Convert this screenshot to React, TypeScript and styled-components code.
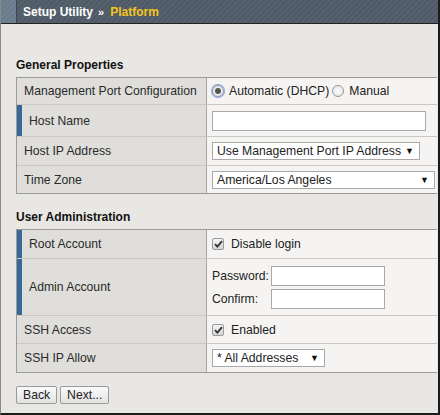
import styled, { createGlobalStyle } from 'styled-components';

const GlobalStyle = createGlobalStyle`
  html, body {
    margin: 0;
    padding: 0;
    background: #e8e7e3;
  }
  body {
    font-family: "Liberation Sans", Arial, sans-serif;
    font-size: 12.2px;
    color: #222;
  }
`;

const generalRows = [
  { label: 'Management Port Configuration', kind: 'radio', required: false },
  { label: 'Host Name', kind: 'text', required: true },
  { label: 'Host IP Address', kind: 'ipselect', required: false },
  { label: 'Time Zone', kind: 'tzselect', required: false },
];

const Frame = styled.div`
  width: 440px;
  height: 415px;
  box-sizing: border-box;
  border-left: 1px solid #8a8a8a;
  border-right: 2px solid #1c1c1c;
  border-bottom: 2px solid #1c1c1c;
  background: #e8e7e3;
  display: flex;
  flex-direction: column;
`;

const TopBar = styled.div`
  display: flex;
  height: 23px;
  border-bottom: 1px solid #222;
`;

const Stub = styled.div`
  width: 15px;
  background: repeating-linear-gradient(135deg, #708292 0 2px, #6a7c8c 2px 4px);
  border-right: 1px solid #3c4650;
`;

const Crumbs = styled.div`
  flex: 1;
  display: flex;
  align-items: center;
  padding-left: 6px;
  font-weight: bold;
  font-size: 12px;
  color: #fff;
  background: repeating-linear-gradient(135deg, #56616e 0 2px, #4f5a66 2px 4px);
`;

const Arrow = styled.span`
  margin: 0 6px 0 5px;
  font-size: 11px;
`;

const Current = styled.span`
  color: #f4c51c;
`;

const Content = styled.div`
  padding: 34px 1px 0 15px;
`;

const SectionTitle = styled.div`
  font-weight: bold;
  font-size: 12px;
  line-height: 15px;
  margin-bottom: 4px;
  color: #111;
`;

const Table = styled.div`
  border: 1px solid #9a9a9a;
  border-right: none;
  margin-bottom: 16px;
`;

const Row = styled.div<{ $h: number }>`
  box-sizing: border-box;
  display: grid;
  grid-template-columns: 190px 1fr;
  height: ${(p) => p.$h}px;
  border-bottom: 1px solid #c9c8c5;

  &:last-child {
    border-bottom: none;
  }
`;

const Label = styled.div<{ $required?: boolean }>`
  display: flex;
  align-items: center;
  background: #dfdedb;
  border-right: 1px solid #a9a9a9;
  padding-left: 7px;
  border-left: ${(p) => (p.$required ? '5px solid #3a6896' : 'none')};
  color: #2a2a2a;
`;

const Value = styled.div`
  display: flex;
  align-items: center;
  background: #f5f4f2;
  padding-left: 5px;
  gap: 3px;
`;

const Stack = styled.div`
  display: flex;
  flex-direction: column;
  gap: 3px;
`;

const Line = styled.div`
  display: flex;
  align-items: center;
`;

const FieldLabel = styled.span`
  width: 59px;
`;

const TextInput = styled.div<{ $w: number }>`
  width: ${(p) => p.$w}px;
  height: 18px;
  background: #fff;
  border: 1px solid #a9a9a9;
`;

const Select = styled.div<{ $w: number }>`
  box-sizing: border-box;
  width: ${(p) => p.$w}px;
  height: 18px;
  background: #fff;
  border: 1px solid #a9a9a9;
  display: flex;
  align-items: center;
  justify-content: space-between;
  padding: 0 5px 0 4px;
  color: #222;
`;

const Caret = styled.span`
  font-size: 9px;
  color: #111;
`;

const Radio = styled.span<{ $on?: boolean }>`
  box-sizing: border-box;
  width: 12px;
  height: 12px;
  border-radius: 50%;
  border: 1px solid #9a9a9a;
  background: radial-gradient(circle, #fff 0%, #dedede 100%);
  display: inline-flex;
  align-items: center;
  justify-content: center;
  margin-right: 2px;
  box-shadow: ${(p) => (p.$on ? '0 0 0 1px #7aa6e8' : 'none')};

  &::after {
    content: '';
    width: 6px;
    height: 6px;
    border-radius: 50%;
    background: ${(p) => (p.$on ? '#555' : 'transparent')};
  }
`;

const Check = styled.span`
  box-sizing: border-box;
  width: 12px;
  height: 12px;
  border: 1px solid #9a9a9a;
  border-radius: 2px;
  background: linear-gradient(#f4f4f4, #d6d6d6);
  display: inline-flex;
  align-items: center;
  justify-content: center;
  margin-right: 4px;
`;

const Buttons = styled.div`
  display: flex;
  gap: 3px;
  margin-top: -3px;
`;

const Button = styled.div`
  height: 16px;
  padding: 0 6px;
  border: 1px solid #9a9a9a;
  border-radius: 2px;
  background: linear-gradient(#fafafa, #e2e2e2);
  display: flex;
  align-items: center;
  color: #222;
`;

const CheckBox = () => (
  <Check>
    <svg width="9" height="8" viewBox="0 0 9 8">
      <path d="M1 4.2 L3.4 6.6 L8 1.2" fill="none" stroke="#333" strokeWidth="1.8" />
    </svg>
  </Check>
);

const renderValue = (kind: string) => {
  switch (kind) {
    case 'radio':
      return (
        <>
          <Radio $on />
          <span>Automatic (DHCP)</span>
          <Radio />
          <span>Manual</span>
        </>
      );
    case 'text':
      return <TextInput $w={212} />;
    case 'ipselect':
      return (
        <Select $w={208}>
          <span>Use Management Port IP Address</span>
          <Caret>▼</Caret>
        </Select>
      );
    default:
      return (
        <Select $w={223}>
          <span>America/Los Angeles</span>
          <Caret>▼</Caret>
        </Select>
      );
  }
};

const heights = [27, 32, 29, 27];

export default function App() {
  return (
    <>
      <GlobalStyle />
      <Frame>
        <TopBar>
          <Stub />
          <Crumbs>
            Setup Utility
            <Arrow>»</Arrow>
            <Current>Platform</Current>
          </Crumbs>
        </TopBar>
        <Content>
          <SectionTitle>General Properties</SectionTitle>
          <Table>
            {generalRows.map((row, i) => (
              <Row $h={heights[i]} key={row.label}>
                <Label $required={row.required}>{row.label}</Label>
                <Value>{renderValue(row.kind)}</Value>
              </Row>
            ))}
          </Table>

          <SectionTitle>User Administration</SectionTitle>
          <Table>
            <Row $h={29}>
              <Label $required>Root Account</Label>
              <Value>
                <CheckBox />
                <span>Disable login</span>
              </Value>
            </Row>
            <Row $h={57}>
              <Label $required>Admin Account</Label>
              <Value>
                <Stack>
                  <Line>
                    <FieldLabel>Password:</FieldLabel>
                    <TextInput $w={112} />
                  </Line>
                  <Line>
                    <FieldLabel>Confirm:</FieldLabel>
                    <TextInput $w={112} />
                  </Line>
                </Stack>
              </Value>
            </Row>
            <Row $h={28}>
              <Label>SSH Access</Label>
              <Value>
                <CheckBox />
                <span>Enabled</span>
              </Value>
            </Row>
            <Row $h={28}>
              <Label>SSH IP Allow</Label>
              <Value>
                <Select $w={113}>
                  <span>* All Addresses</span>
                  <Caret>▼</Caret>
                </Select>
              </Value>
            </Row>
          </Table>

          <Buttons>
            <Button>Back</Button>
            <Button>Next...</Button>
          </Buttons>
        </Content>
      </Frame>
    </>
  );
}
